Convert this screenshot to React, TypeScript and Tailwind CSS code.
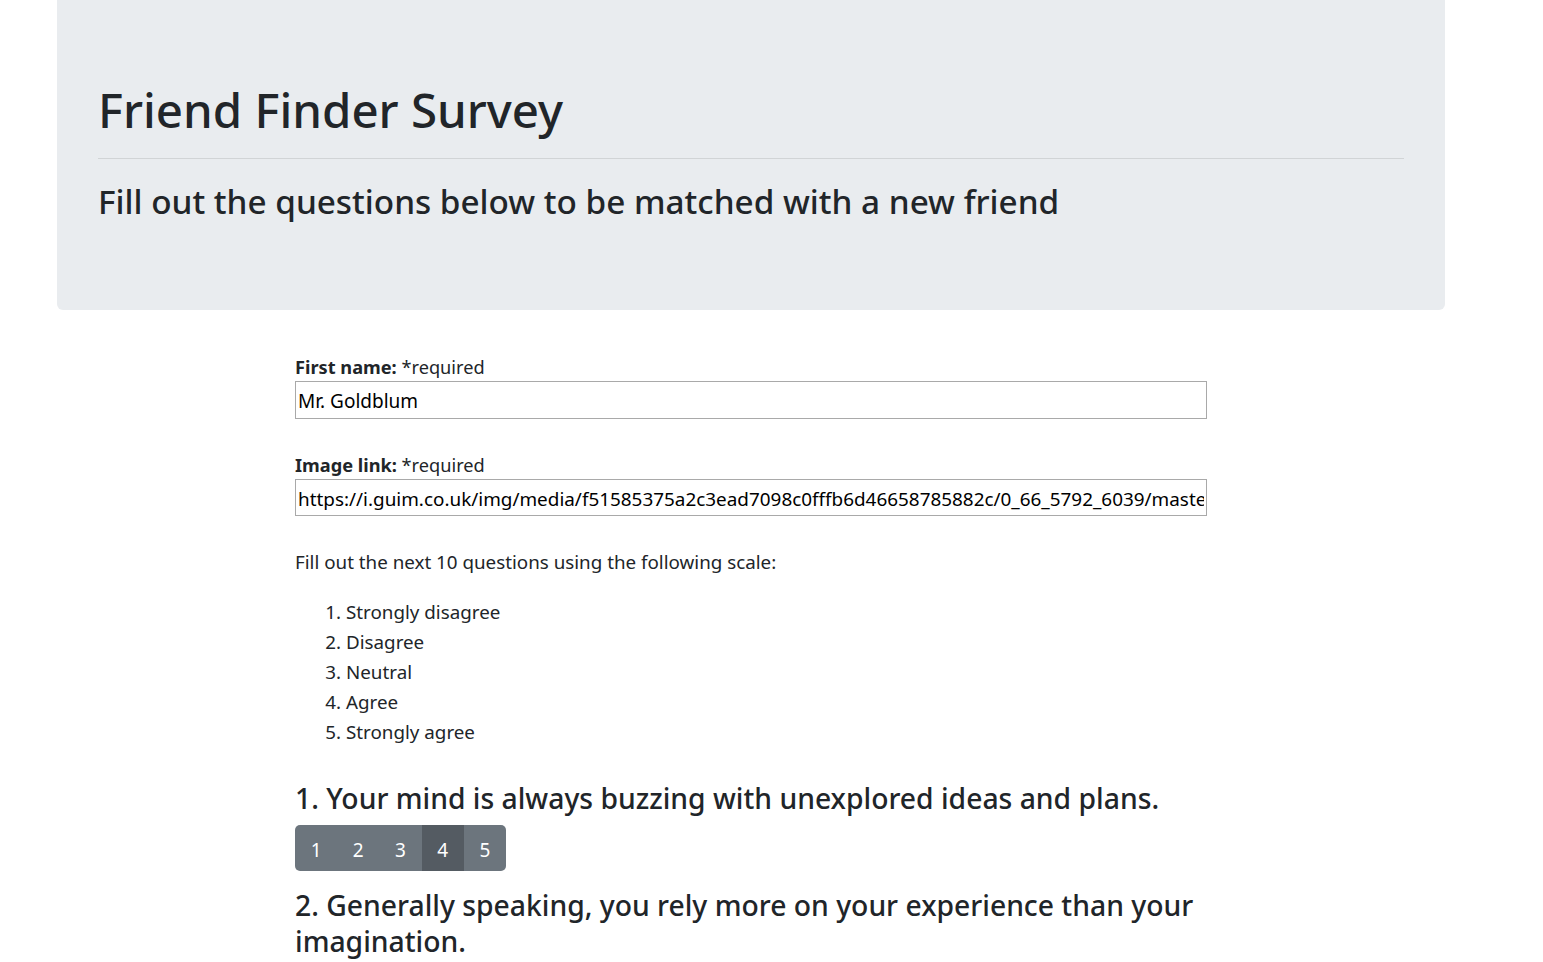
import { useState } from "react";

const scale = [
  "Strongly disagree",
  "Disagree",
  "Neutral",
  "Agree",
  "Strongly agree",
];

const questions = [
  { id: 1, text: "Your mind is always buzzing with unexplored ideas and plans.", picked: 4 },
  { id: 2, text: "Generally speaking, you rely more on your experience than your imagination.", picked: 0 },
];

function Choices({ value, onPick }: { value: number; onPick: (n: number) => void }) {
  return (
    <div className="flex w-fit overflow-hidden rounded-[5px]">
      {[1, 2, 3, 4, 5].map((n) => (
        <button
          key={n}
          type="button"
          onClick={() => onPick(n)}
          className={
            "flex h-[46px] w-[42.2px] items-center justify-center pt-[4px] text-[19px] text-white " +
            (value === n ? "bg-[#545b62]" : "bg-[#6c757d]")
          }
        >
          {n}
        </button>
      ))}
    </div>
  );
}

export default function App() {
  const [name, setName] = useState("Mr. Goldblum");
  const [link, setLink] = useState(
    "https://i.guim.co.uk/img/media/f51585375a2c3ead7098c0fffb6d46658785882c/0_66_5792_6039/master/5792.jpg"
  );
  const [answers, setAnswers] = useState(questions.map((q) => q.picked));

  return (
    <div
      className="min-h-screen bg-white text-[#212529]"
      style={{ fontFamily: '"Noto Sans", "Open Sans", sans-serif' }}
    >
      <div className="ml-[57px] w-[1388px]">
        <header className="rounded-b-[6px] bg-[#e9ecef] px-[41px] pt-[80px] pb-[88px]">
          <h1 className="text-[47.4px] leading-[60px] font-medium">Friend Finder Survey</h1>
          <hr className="mt-[18px] border-black/10" />
          <h3 className="mt-[21px] text-[33.3px] leading-[42px] font-medium">
            Fill out the questions below to be matched with a new friend
          </h3>
        </header>

        <form className="mx-auto w-[912px] pt-[43px]" onSubmit={(e) => e.preventDefault()}>
          <label className="block text-[18.2px] leading-[28px]">
            <span className="font-bold">First name:</span> *required
          </label>
          <input
            value={name}
            onChange={(e) => setName(e.target.value)}
            className="block h-[38px] w-full border border-[#a9a9a9] px-[2px] pt-[2px] text-[19px] text-black outline-none"
          />

          <label className="mt-[32px] block text-[18.2px] leading-[28px]">
            <span className="font-bold">Image link:</span> *required
          </label>
          <input
            value={link}
            onChange={(e) => setLink(e.target.value)}
            className="block h-[37px] w-full border border-[#a9a9a9] px-[2px] pt-[2px] text-[18.9px] text-black outline-none"
          />

          <p className="mt-[31px] text-[18.8px] leading-[30px]">
            Fill out the next 10 questions using the following scale:
          </p>
          <ol className="mt-[20px] list-decimal pl-[51px] text-[18.8px] leading-[30px]">
            {scale.map((s) => (
              <li key={s}>{s}</li>
            ))}
          </ol>

          {questions.map((q, i) => (
            <div key={q.id} className={i === 0 ? "mt-[33px]" : "mt-[16px]"}>
              <h4 className="text-[28.3px] leading-[36px] font-medium">{`${q.id}. ${q.text}`}</h4>
              {i === 0 && (
                <div className="mt-[9px]">
                  <Choices
                    value={answers[i]}
                    onPick={(n) => setAnswers(answers.map((a, j) => (j === i ? n : a)))}
                  />
                </div>
              )}
            </div>
          ))}
        </form>
      </div>
    </div>
  );
}
